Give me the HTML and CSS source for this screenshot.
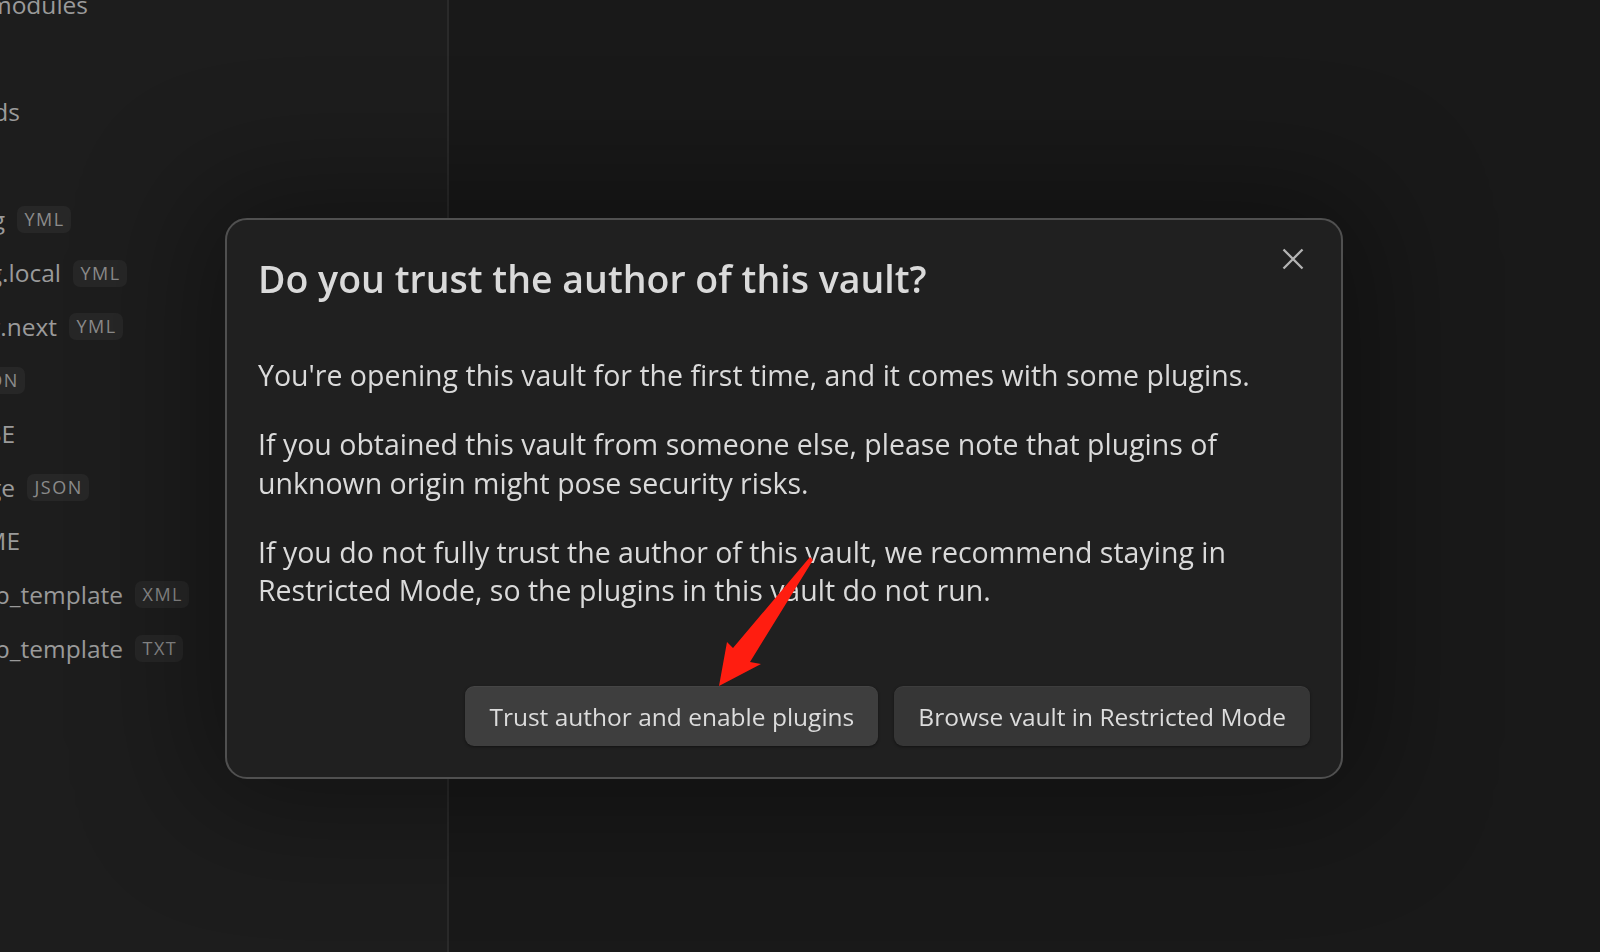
FILE: index.html
```html
<!DOCTYPE html>
<html lang="en">
<head>
<meta charset="utf-8">
<title>Do you trust the author of this vault?</title>
<link rel="stylesheet" href="styles.css">
</head>
<body>
<div class="app">
  <aside class="sidebar">
    <div class="tree">
      <div class="row"><span class="clip end-88"><span class="name">node_modules</span></span></div>
      <div class="row"><span class="clip end-0"><span class="name">public</span></span></div>
      <div class="row"><span class="clip end-20"><span class="name">scaffolds</span></span></div>
      <div class="row"><span class="clip end-0"><span class="name">source</span></span></div>
      <div class="row"><span class="clip end-5"><span class="name">_config</span></span><span class="badge">YML</span></div>
      <div class="row"><span class="clip end-61"><span class="name">_config.local</span></span><span class="badge">YML</span></div>
      <div class="row"><span class="clip end-57"><span class="name">_config.next</span></span><span class="badge">YML</span></div>
      <div class="row"><span class="clip end-neg"><span class="name">db</span></span><span class="badge">JSON</span></div>
      <div class="row"><span class="clip end-15"><span class="name">LICENSE</span></span></div>
      <div class="row"><span class="clip end-15"><span class="name">package</span></span><span class="badge">JSON</span></div>
      <div class="row"><span class="clip end-20"><span class="name">README</span></span></div>
      <div class="row"><span class="clip end-123"><span class="name">sitemap_template</span></span><span class="badge">XML</span></div>
      <div class="row"><span class="clip end-123"><span class="name">sitemap_template</span></span><span class="badge">TXT</span></div>
    </div>
  </aside>
  <main class="workspace"></main>
</div>

<div class="modal-layer">
  <div class="modal">
    <button class="modal-close" aria-label="Close">
      <svg viewBox="0 0 22 22" width="22" height="22"><path d="M1.5 1.5 L20.5 20.5 M20.5 1.5 L1.5 20.5" /></svg>
    </button>
    <h1 class="modal-title">Do you trust the author of this vault?</h1>
    <div class="modal-content">
      <p>You're opening this vault for the first time, and it comes with some plugins.</p>
      <p>If you obtained this vault from someone else, please note that plugins of unknown origin might pose security risks.</p>
      <p>If you do not fully trust the author of this vault, we recommend staying in Restricted Mode, so the plugins in this vault do not run.</p>
    </div>
    <div class="modal-buttons">
      <button class="btn btn-hover">Trust author and enable plugins</button>
      <button class="btn">Browse vault in Restricted Mode</button>
    </div>
  </div>
</div>

<svg class="annotation" viewBox="0 0 1600 952" width="1600" height="952">
  <polygon points="810,557 813,560 750,662 761,664 719,686 727,642 733,648" />
</svg>
</body>
</html>
```

FILE: styles.css
```css
* { box-sizing: border-box; }

html, body {
  margin: 0;
  padding: 0;
  width: 1600px;
  height: 952px;
  overflow: hidden;
  background: #191919;
  font-family: "Open Sans", "Noto Sans", "Liberation Sans", sans-serif;
}

.app {
  display: flex;
  height: 952px;
}

.sidebar {
  flex: none;
  width: 449px;
  height: 100%;
  background: #1d1d1d;
  border-right: 2px solid #2a2a2a;
  overflow: hidden;
}

.tree {
  margin-top: -22px;
}

.row {
  display: flex;
  align-items: center;
  height: 53.65px;
  white-space: nowrap;
}

.clip {
  flex: none;
  display: flex;
  justify-content: flex-end;
  overflow: visible;
}

.end-0 { width: 0; }
.end-5 { width: 5px; }
.end-15 { width: 15px; }
.end-20 { width: 20px; }
.end-57 { width: 57px; }
.end-61 { width: 61px; }
.end-88 { width: 88px; }
.end-123 { width: 123px; }
.end-neg { width: 0; margin-left: -49px; }

.name {
  flex: none;
  font-size: 24.5px;
  line-height: 53.65px;
  color: #9a9a9a;
}

.badge {
  flex: none;
  margin-left: 12px;
  height: 27px;
  padding: 0 6px 0 7.5px;
  border-radius: 7px;
  background: #272727;
  color: #8b8b8b;
  font-size: 18px;
  font-weight: 500;
  letter-spacing: 1.5px;
  line-height: 27px;
}

.workspace {
  flex: 1;
  background: #191919;
}

/* Modal */
.modal-layer {
  position: fixed;
  inset: 0;
}

.modal {
  position: absolute;
  left: 225px;
  top: 218px;
  width: 1118px;
  height: 561px;
  display: flex;
  flex-direction: column;
  padding: 37px 31px 31px 31px;
  background: #202020;
  border: 2px solid #505050;
  border-radius: 22px;
  box-shadow: 0 0 120px 30px rgba(0, 0, 0, 0.35);
  color: #dadada;
}

.modal-close {
  position: absolute;
  top: 28px;
  right: 37px;
  width: 22px;
  height: 22px;
  padding: 0;
  border: 0;
  background: none;
}

.modal-close svg {
  display: block;
  stroke: #b3b3b3;
  stroke-width: 2.3;
  fill: none;
}

.modal-title {
  margin: 0;
  font-size: 37.5px;
  font-weight: 600;
  line-height: 43px;
  color: #dadada;
}

.modal-content {
  margin-top: 56px;
}

.modal-content p {
  margin: 0 0 30.4px 0;
  font-size: 28.5px;
  line-height: 38.64px;
  color: #dadada;
}

.modal-content p:last-child {
  margin-bottom: 0;
}

.modal-buttons {
  margin-top: auto;
  display: flex;
  justify-content: flex-end;
  gap: 16px;
}

.btn {
  height: 60px;
  padding: 0 24px;
  border: 0;
  border-radius: 9px;
  background: #363636;
  color: #dcdcdc;
  font-family: "Open Sans", "Noto Sans", sans-serif;
  font-size: 24.5px;
  box-shadow: 0 1px 3px rgba(0, 0, 0, 0.45), inset 0 1px 0 rgba(255, 255, 255, 0.04);
}

.btn-hover {
  background: #3e3e3e;
}

.annotation {
  position: fixed;
  left: 0;
  top: 0;
  pointer-events: none;
}

.annotation polygon {
  fill: #ff1d10;
}
```
